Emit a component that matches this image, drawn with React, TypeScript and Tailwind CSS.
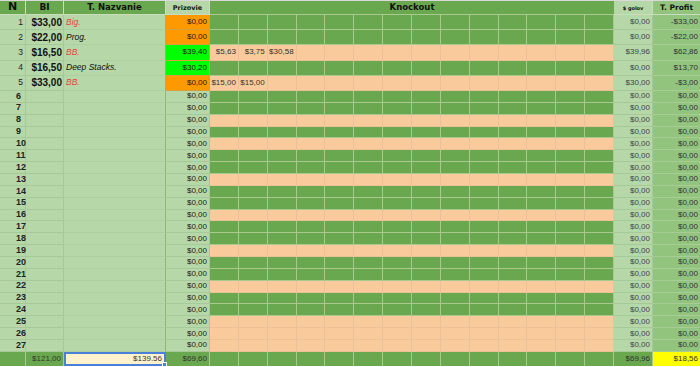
import React from "react";

type TopRow = {
  bi: string;
  name: string;
  red: boolean;
  prize: string;
  prizeBg: string;
  ko: string[];
  golov: string;
  profit: string;
};

const topRows: TopRow[] = [
  { bi: "$33,00", name: "Big.", red: true, prize: "$0,00", prizeBg: "bg-[#ff9900]", ko: [], golov: "$0,00", profit: "-$33,00" },
  { bi: "$22,00", name: "Prog.", red: false, prize: "$0,00", prizeBg: "bg-[#ff9900]", ko: [], golov: "$0,00", profit: "-$22,00" },
  { bi: "$16,50", name: "BB.", red: true, prize: "$39,40", prizeBg: "bg-[#00ff00]", ko: ["$5,63", "$3,75", "$30,58"], golov: "$39,96", profit: "$62,86" },
  { bi: "$16,50", name: "Deep Stacks.", red: false, prize: "$30,20", prizeBg: "bg-[#00ff00]", ko: [], golov: "$0,00", profit: "$13,70" },
  { bi: "$33,00", name: "BB.", red: true, prize: "$0,00", prizeBg: "bg-[#ff9900]", ko: ["$15,00", "$15,00"], golov: "$30,00", profit: "-$3,00" },
];

// g = green knockout row, p = peach knockout row
const pattern = "ggpgpggpgpggpggpggpggpggppp";

const KO_COLS = 14;

const font = "font-['Liberation_Sans',Arial,sans-serif]";
const headFont = "font-['DejaVu_Sans',sans-serif] font-bold";

const Knockouts = ({ peach, values }: { peach: boolean; values: string[] }) => (
  <div className="flex w-[404px]">
    {Array.from({ length: KO_COLS }).map((_, i) => (
      <div
        key={i}
        className={`flex flex-1 items-center justify-end border-r border-b pr-[2px] text-[8px] text-[#333] ${
          peach ? "border-[#ecc198] bg-[#f9cb9c]" : "border-[#a9c98f] bg-[#6aa84f]"
        }`}
      >
        {values[i] ?? ""}
      </div>
    ))}
  </div>
);

const Row = ({ n, data, h }: { n: number; data?: TopRow; h: string }) => {
  const peach = pattern[n - 1] === "p";
  return (
    <div className={`flex ${h}`}>
      <div
        className={`flex w-[26px] items-center border-r border-b border-[#a7c99a] bg-[#b6d7a8] text-[#222] ${
          data ? "justify-end pr-[2px] text-[8.5px]" : "pl-[16px] text-[9px] font-bold"
        }`}
      >
        {n}
      </div>
      <div className="flex w-[38px] items-center justify-end border-r border-b border-[#a7c99a] bg-[#b6d7a8] pr-[1px] text-[10px] font-bold text-[#111]">
        {data?.bi}
      </div>
      <div
        className={`flex w-[102px] items-center border-r border-b border-r-[#8fb57d] border-b-[#aecfa1] bg-[#b6d7a8] pl-[2px] text-[8.5px] italic ${
          data?.red ? "text-[#e8453c]" : "text-[#111]"
        }`}
      >
        {data?.name}
      </div>
      <div
        className={`flex w-[44px] items-center justify-end border-r border-b pr-[2px] text-[8px] text-[#1a1a1a] ${
          data ? `${data.prizeBg} border-[#d9a03a]` : "border-[#a7c99a] bg-[#b6d7a8]"
        }`}
      >
        {data ? data.prize : "$0,00"}
      </div>
      <Knockouts peach={peach} values={data?.ko ?? []} />
      <div className="flex w-[39px] items-center justify-end border-r border-b border-[#a7c99a] bg-[#b6d7a8] pr-[2px] text-[8px] text-[#444]">
        {data ? data.golov : "$0,00"}
      </div>
      <div className="flex w-[47px] items-center justify-end border-b border-[#a8cc95] bg-[#93c47d] pr-[2px] text-[8px] text-[#333]">
        {data ? data.profit : "$0,00"}
      </div>
    </div>
  );
};

export default function App() {
  return (
    <div className={`h-[367px] w-[700px] overflow-hidden bg-white ${font}`}>
      {/* Header */}
      <div className="flex h-[15px] border-t border-[#d9d9d9] text-[#111]">
        <div className={`flex w-[26px] items-center justify-center border-r border-b border-[#c9dcbb] bg-[#6aa84f] text-[11px] ${headFont}`}>
          N
        </div>
        <div className={`flex w-[38px] items-center justify-center border-r border-b border-[#c9dcbb] bg-[#6aa84f] text-[9px] ${headFont}`}>
          BI
        </div>
        <div className={`flex w-[102px] items-center justify-center border-r border-b border-[#c9dcbb] bg-[#6aa84f] text-[8.5px] ${headFont}`}>
          T. Nazvanie
        </div>
        <div className={`flex w-[44px] items-center justify-center border-r border-b border-[#c9dcbb] bg-[#b6d7a8] pt-[2px] text-[6.5px] ${headFont}`}>
          Prizovie
        </div>
        <div className={`flex w-[404px] items-center justify-center border-b border-[#a9c98f] bg-[#6aa84f] text-[8.5px] ${headFont}`}>
          Knockout
        </div>
        <div className={`flex w-[39px] items-center justify-center border-r border-b border-[#c9dcbb] bg-[#b6d7a8] pt-[2px] text-[5px] ${headFont}`}>
          $ golov
        </div>
        <div className={`flex w-[47px] items-center justify-center border-b border-[#c9dcbb] bg-[#93c47d] text-[7.5px] ${headFont}`}>
          T. Profit
        </div>
      </div>

      {/* Rows */}
      {topRows.map((r, i) => (
        <Row key={i} n={i + 1} data={r} h="h-[15.2px]" />
      ))}
      {Array.from({ length: 22 }).map((_, i) => (
        <Row key={i + 6} n={i + 6} h="h-[11.86px]" />
      ))}

      {/* Totals */}
      <div className="flex h-[14px] text-[8px] text-[#333]">
        <div className="w-[26px] border-r border-[#a9c98f] bg-[#6aa84f]" />
        <div className="flex w-[38px] items-center justify-end border-r border-[#a9c98f] bg-[#6aa84f] pr-[2px]">
          $121,00
        </div>
        <div className="relative flex w-[102px] items-center justify-end border-2 border-[#4a7fdc] bg-[#fff2cc] pr-[2px]">
          $139.56
          <div className="absolute right-[-3px] bottom-[-3px] h-[5px] w-[5px] border border-white bg-[#4a7fdc]" />
        </div>
        <div className="flex w-[44px] items-center justify-end border-r border-[#a9c98f] bg-[#6aa84f] pr-[2px]">
          $69,60
        </div>
        <div className="flex w-[404px]">
          {Array.from({ length: KO_COLS }).map((_, i) => (
            <div key={i} className="flex-1 border-r border-[#a9c98f] bg-[#6aa84f]" />
          ))}
        </div>
        <div className="flex w-[39px] items-center justify-end border-r border-[#a9c98f] bg-[#6aa84f] pr-[2px]">
          $69,96
        </div>
        <div className="flex w-[47px] items-center justify-end bg-[#ffff00] pr-[2px]">$18,56</div>
      </div>
    </div>
  );
}
